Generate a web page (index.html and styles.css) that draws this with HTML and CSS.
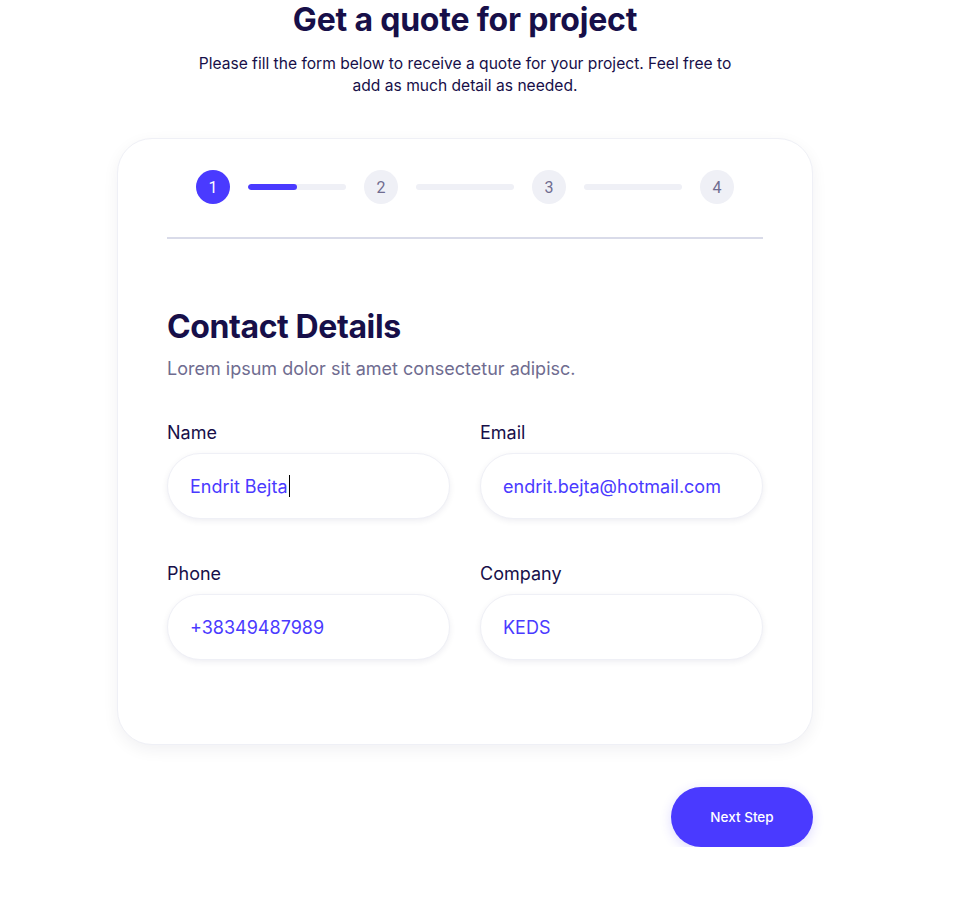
FILE: index.html
```html
<!DOCTYPE html>
<html lang="en">
<head>
<meta charset="utf-8">
<title>Get a quote for project</title>
<link rel="stylesheet" href="styles.css">
</head>
<body>
<main class="page">
  <h1 class="title">Get a quote for project</h1>
  <p class="lead">Please fill the form below to receive a quote for your project. Feel free to add as much detail as needed.</p>

  <section class="card">
    <div class="stepper">
      <span class="step step-active">1</span>
      <span class="bar"><span class="bar-fill"></span></span>
      <span class="step">2</span>
      <span class="bar"></span>
      <span class="step">3</span>
      <span class="bar"></span>
      <span class="step">4</span>
    </div>
    <div class="divider"></div>

    <h2 class="section-title">Contact Details</h2>
    <p class="section-sub">Lorem ipsum dolor sit amet consectetur adipisc.</p>

    <div class="fields">
      <div class="field">
        <label class="label">Name</label>
        <div class="input">Endrit Bejta<span class="caret"></span></div>
      </div>
      <div class="field">
        <label class="label">Email</label>
        <div class="input">endrit.bejta@hotmail.com</div>
      </div>
      <div class="field">
        <label class="label">Phone</label>
        <div class="input">+38349487989</div>
      </div>
      <div class="field">
        <label class="label">Company</label>
        <div class="input">KEDS</div>
      </div>
    </div>
  </section>

  <div class="actions">
    <button class="btn">Next Step</button>
  </div>
</main>
</body>
</html>
```
FILE: styles.css
```css
* { box-sizing: border-box; }
html, body { margin: 0; padding: 0; background: #ffffff; }
body {
  font-family: Inter, "DejaVu Sans", sans-serif;
  color: #170f49;
}
.page {
  width: 696px;
  margin-left: 117px;
  display: flex;
  flex-direction: column;
}
.title {
  margin: 0;
  font-size: 32px;
  line-height: 40px;
  font-weight: 700;
  text-align: center;
  color: #170f49;
  letter-spacing: -0.2px;
}
.lead {
  margin: 13px auto 0;
  width: 560px;
  font-size: 15.6px;
  line-height: 22px;
  text-align: center;
  color: #170f49;
}
.card {
  margin-top: 41px;
  border: 1px solid #eff0f6;
  border-radius: 35px;
  box-shadow: 0 5px 16px rgba(8, 15, 52, 0.06);
  padding: 31px 49px 84px;
  background: #fff;
}
.stepper {
  display: flex;
  align-items: center;
  justify-content: center;
  gap: 18px;
}
.step {
  width: 34px;
  height: 34px;
  border-radius: 50%;
  background: #eff0f6;
  color: #6f6c90;
  font-size: 16px;
  display: flex;
  align-items: center;
  justify-content: center;
  font-family: Roboto, sans-serif;
}
.step-active {
  background: #4a3aff;
  color: #fff;
}
.bar {
  width: 98px;
  height: 6px;
  border-radius: 40px;
  background: #eff0f6;
  display: block;
  overflow: hidden;
}
.bar-fill {
  display: block;
  width: 49px;
  height: 100%;
  border-radius: 40px;
  background: #4a3aff;
}
.divider {
  height: 2px;
  background: #d9dbe9;
  margin-top: 33px;
}
.section-title {
  margin: 68px 0 0;
  font-size: 32px;
  line-height: 40px;
  font-weight: 700;
  color: #170f49;
  letter-spacing: -0.4px;
}
.section-sub {
  margin: 7px 0 0;
  font-size: 18px;
  line-height: 30px;
  color: #6f6c90;
}
.fields {
  margin-top: 39px;
  display: grid;
  grid-template-columns: 1fr 1fr;
  column-gap: 30px;
  row-gap: 45px;
}
.field {
  display: flex;
  flex-direction: column;
}
.label {
  font-size: 18px;
  line-height: 20px;
  color: #170f49;
  margin-bottom: 10px;
}
.input {
  height: 66px;
  border: 1px solid #eff0f6;
  border-radius: 46px;
  box-shadow: 0 2px 6px rgba(19, 18, 66, 0.07);
  padding: 0 22px;
  display: flex;
  align-items: center;
  font-size: 18px;
  color: #4a3aff;
  background: #fff;
}
.caret {
  display: inline-block;
  width: 1px;
  height: 22px;
  background: #000;
  margin-left: 1px;
}
.actions {
  display: flex;
  justify-content: flex-end;
  margin-top: 42px;
}
.btn {
  width: 142px;
  height: 60px;
  border: none;
  border-radius: 56px;
  background: #4a3aff;
  color: #fff;
  font-family: Inter, sans-serif;
  font-size: 13.5px;
  font-weight: 500;
  box-shadow: 0 3px 12px rgba(74, 58, 255, 0.18);
}
```
